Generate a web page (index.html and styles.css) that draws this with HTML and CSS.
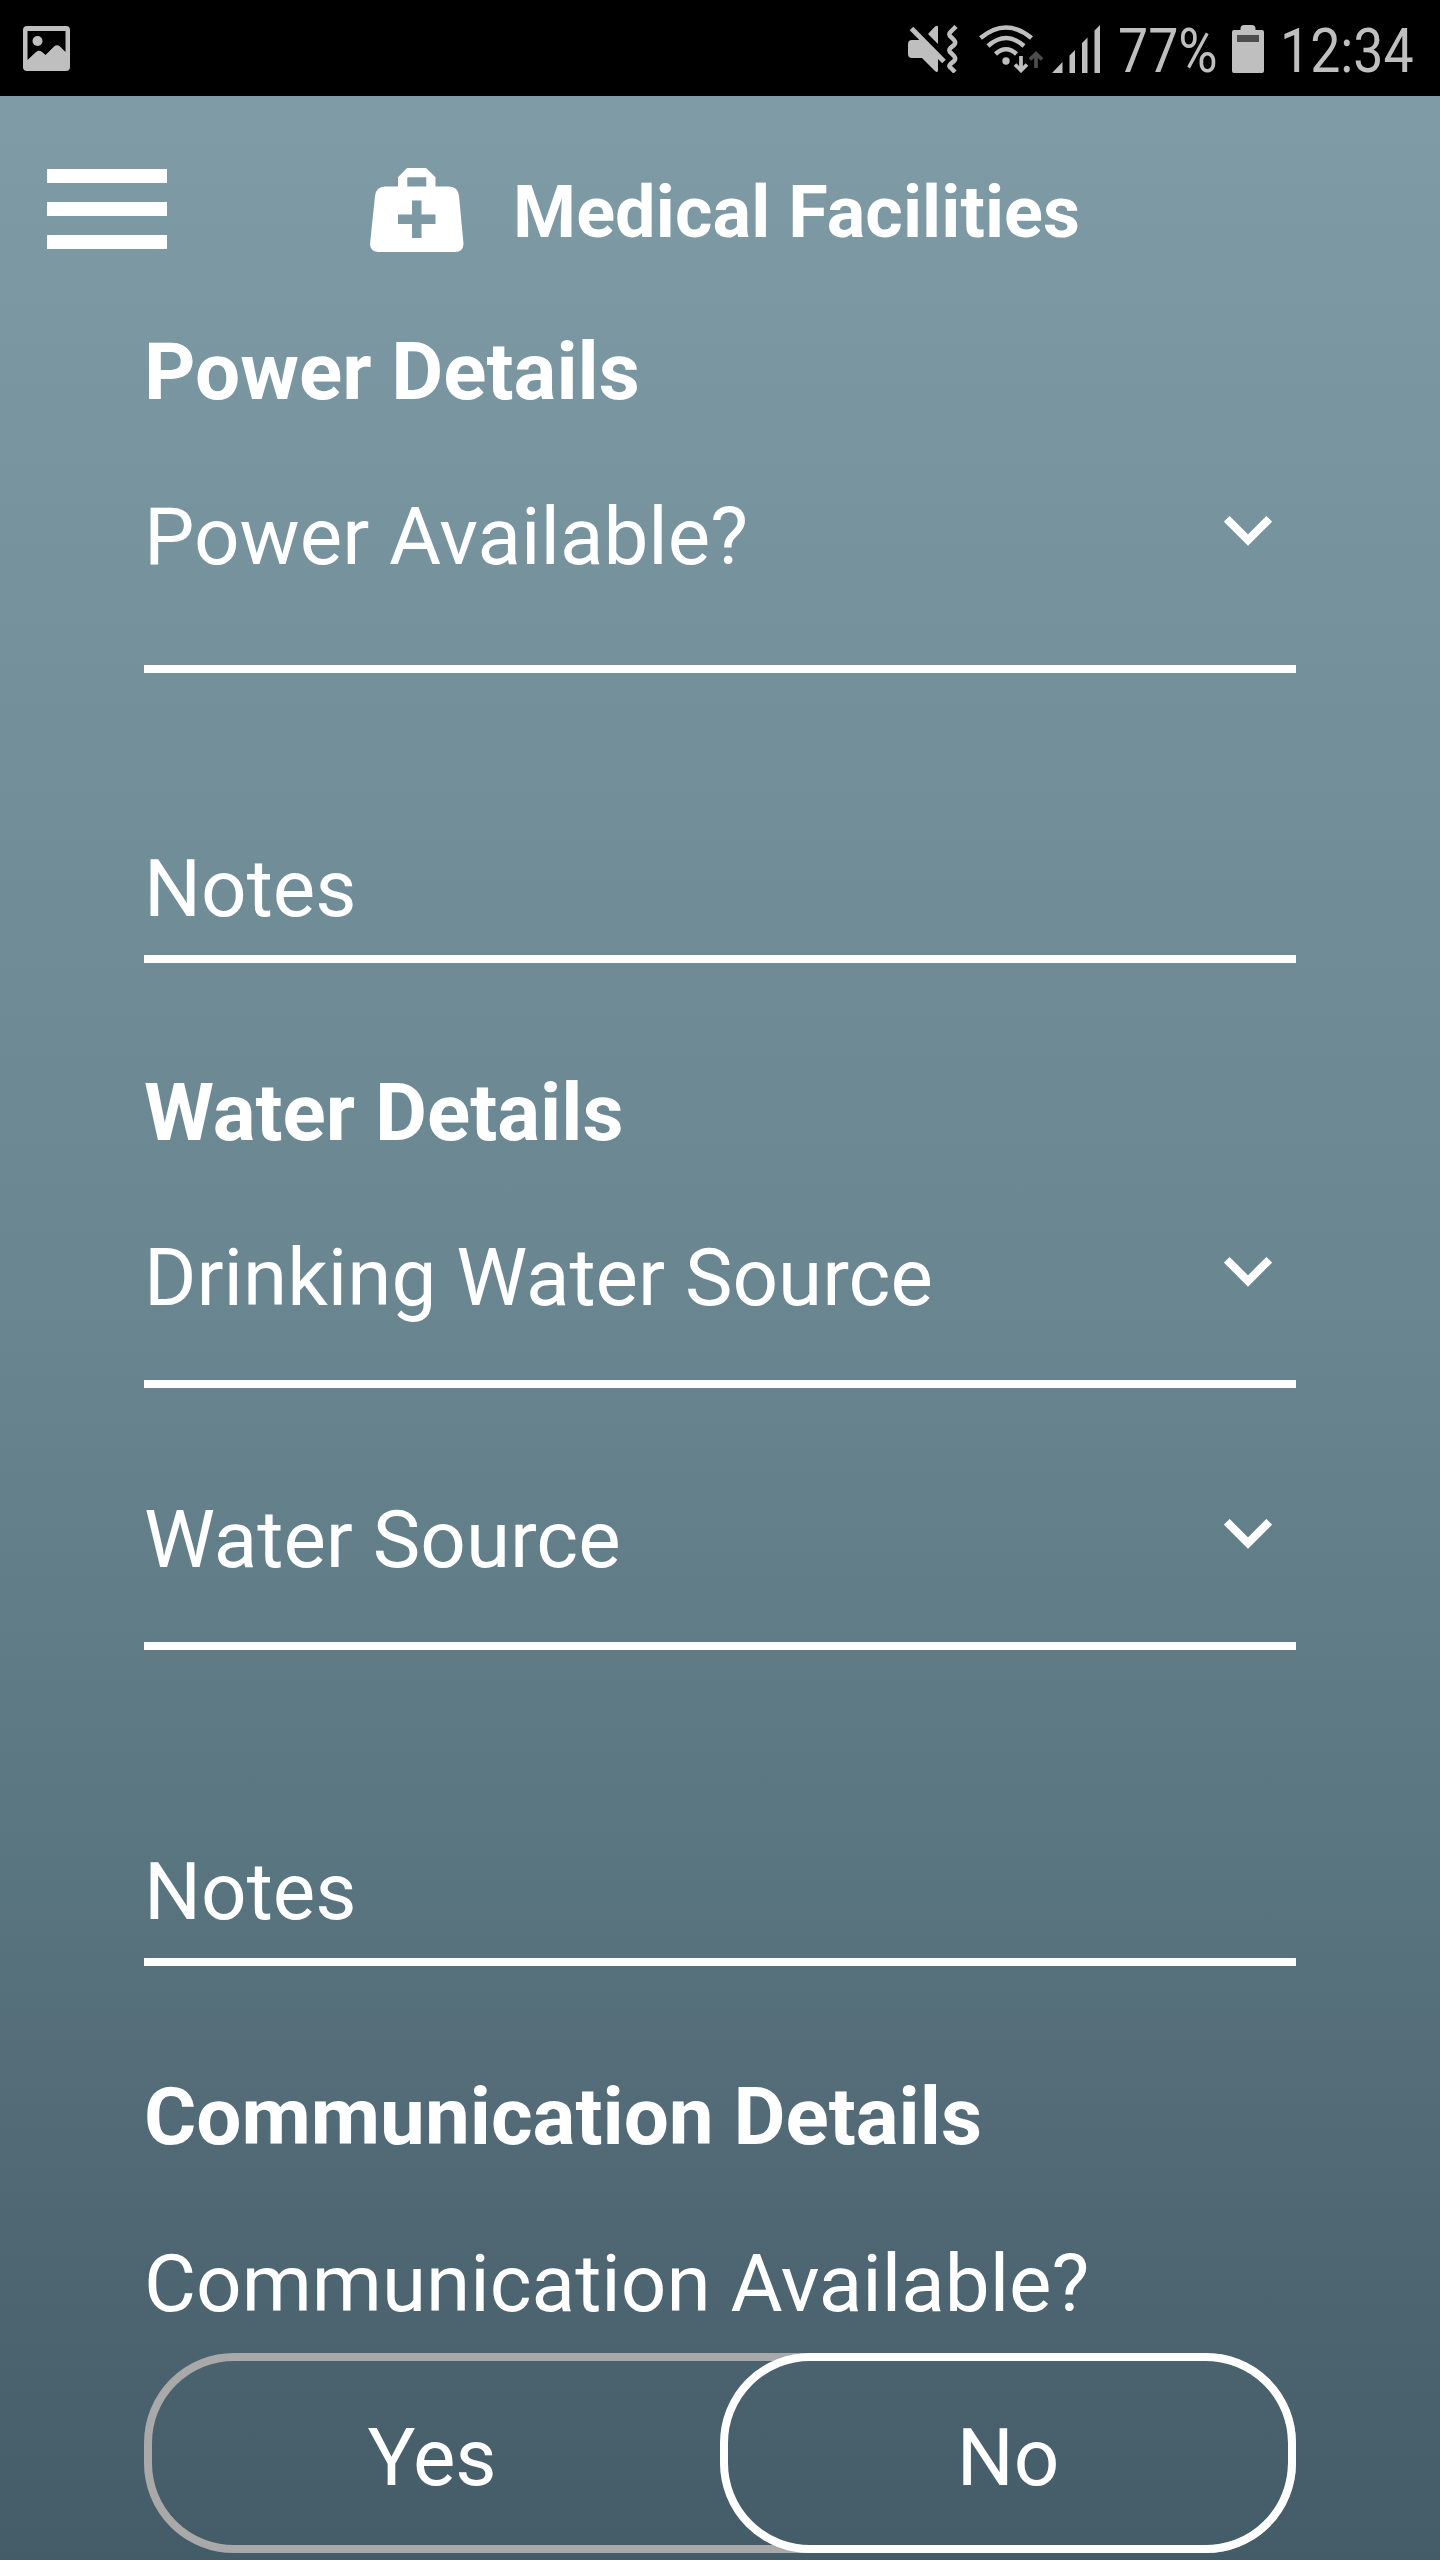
FILE: index.html
```
<!DOCTYPE html>
<html lang="en">
<head>
    <meta charset="UTF-8">
    <meta name="viewport" content="width=device-width, initial-scale=1.0">
    <title>Medical Facilities</title>
    <link rel="stylesheet" href="styles.css">
</head>
<body>
    <div class="status-bar">
        <svg class="icon-image" width="47" height="45" viewBox="0 0 47 45">
            <path fill="#bfbfbf" fill-rule="evenodd" d="M4 0H43Q47 0 47 4V41Q47 45 43 45H4Q0 45 0 41V4Q0 0 4 0ZM4.500 5V34L13 26Q16 23.500 19 26L22.500 29L31 20.500Q34 18 37 20.500L42.500 26V5Z"/>
            <circle cx="14.500" cy="15" r="5" fill="#bfbfbf"/>
        </svg>
        <div class="status-right">
            <svg class="icon-mute" width="50" height="48" viewBox="0 0 50 48">
                <path fill="#bfbfbf" d="M4 15H12L30 31V46Q29 48 27 46L14 33H4Q0 33 0 29V19Q0 15 4 15ZM20 9L27 1.500Q30 0 30 2V19Z"/>
                <path d="M8 1L40 34" stroke="#000" stroke-width="5"/>
                <path d="M3.500 3.500L36 36.500" stroke="#bfbfbf" stroke-width="5"/>
                <path d="M48 1.500L42.500 7Q40 9.500 43 12L46 15Q48.500 17.500 46 20L42.500 23Q40 25.500 43 28L46 31Q48.500 33.500 46 36L42.500 39Q40 41.500 43 43L47 47" fill="none" stroke="#bfbfbf" stroke-width="4.500"/>
            </svg>
            <svg class="icon-wifi" width="66" height="48" viewBox="0 0 66 48">
                <g fill="none" stroke="#bfbfbf" stroke-width="4.500">
                    <path d="M2.500 13Q28 -8 53.500 13"/>
                    <path d="M10 21Q28 5 46 21"/>
                    <path d="M17.500 29Q28 19.500 38.500 29"/>
                </g>
                <circle cx="28" cy="36" r="3.700" fill="#bfbfbf"/>
                <path d="M43 31V45M37 39.500L43 45.500L49 39.500" fill="none" stroke="#bfbfbf" stroke-width="3.700"/>
                <path d="M58 43V28M52 34.500L58 28.500L64 34.500" fill="none" stroke="#4d4d4d" stroke-width="3.700"/>
            </svg>
            <svg class="icon-signal" width="48" height="48" viewBox="0 0 48 48">
                <path fill="#bfbfbf" d="M0 48L10.500 37V48ZM17.500 30.500L23 25V48H17.500ZM30 18L35.500 12.500V48H30ZM42.500 5.500L48 0V48H42.500Z"/>
            </svg>
            <span class="percent">77%</span>
            <svg class="icon-battery" width="32" height="48" viewBox="0 0 32 48">
                <path fill="#bfbfbf" d="M2 5H8.500V3Q9 0 12 0H20Q23 0 23.500 3V5H30Q32 5 32 7V46Q32 48 30 48H2Q0 48 0 46V7Q0 5 2 5Z"/>
                <rect x="5" y="10" width="22" height="7" fill="#4d4d4d"/>
            </svg>
            <span class="clock">12:34</span>
        </div>
    </div>

    <div class="page">
        <div class="header">
            <div class="menu">
                <span></span>
                <span></span>
                <span></span>
            </div>
            <svg class="icon-kit" width="94" height="84" viewBox="0 0 94 84">
                <path fill="#fff" fill-rule="evenodd" d="M37 0H56L65.500 9.300V18.600H79Q88 19 89 28L93.500 76Q93 84 85 84H8Q0 83 0 76L5 28Q6 19 15 18.600H28V9.300ZM37.300 9.300V18.600H56.300V9.300ZM42 32.500V46.500H28V56H42V70H51.500V56H65.500V46.500H51.500V32.500Z"/>
            </svg>
            <h1>Medical Facilities</h1>
        </div>

        <div class="form">
            <h2>Power Details</h2>
            <div class="field select tall">
                <span>Power Available?</span>
                <svg class="chevron" width="48" height="30" viewBox="0 0 48 30"><path d="M2.800 2.800L24 24L45.200 2.800" fill="none" stroke="#fff" stroke-width="8"/></svg>
            </div>
            <div class="field notes">Notes</div>

            <h2>Water Details</h2>
            <div class="field select">
                <span>Drinking Water Source</span>
                <svg class="chevron" width="48" height="30" viewBox="0 0 48 30"><path d="M2.800 2.800L24 24L45.200 2.800" fill="none" stroke="#fff" stroke-width="8"/></svg>
            </div>
            <div class="field select next">
                <span>Water Source</span>
                <svg class="chevron" width="48" height="30" viewBox="0 0 48 30"><path d="M2.800 2.800L24 24L45.200 2.800" fill="none" stroke="#fff" stroke-width="8"/></svg>
            </div>
            <div class="field notes water-notes">Notes</div>

            <h2>Communication Details</h2>
            <div class="question">Communication Available?</div>
            <div class="toggle">
                <div class="option">Yes</div>
                <div class="option selected">No</div>
            </div>
        </div>
    </div>
</body>
</html>
```
FILE: styles.css
```
* {
    box-sizing: border-box;
}
body {
    margin: 0;
    width: 1440px;
    height: 2560px;
    overflow: hidden;
    font-family: Roboto, sans-serif;
    color: white;
    background: #000;
}
svg {
    display: block;
    flex: none;
}
.status-bar {
    display: flex;
    justify-content: space-between;
    align-items: flex-start;
    height: 96px;
    padding: 25px 28px 0 23px;
    color: #bfbfbf;
}
.icon-image {
    margin-top: 1px;
}
.status-right {
    display: flex;
}
.icon-wifi {
    margin-left: 20px;
}
.icon-signal {
    margin-left: 8px;
}
.percent, .clock {
    font-size: 61px;
    line-height: 72px;
    height: 48px;
    margin-top: -10px;
    white-space: nowrap;
    transform: scaleX(0.88);
    transform-origin: left;
}
.percent {
    width: 95px;
    margin-left: 18px;
}
.icon-battery {
    margin-left: 19px;
}
.clock {
    width: 132px;
    margin-left: 16px;
}
.page {
    height: 2464px;
    background: linear-gradient(#7e9ba6 0%, #69858f 50%, #59757f 72%, #526a76 83%, #445c67 100%);
}
.header {
    display: flex;
    align-items: flex-start;
    height: 187px;
    padding: 72px 47px 0;
}
.menu {
    display: flex;
    flex-direction: column;
    justify-content: space-between;
    width: 120px;
    height: 80px;
    margin-top: 1px;
}
.menu span {
    height: 14px;
    background: white;
}
.icon-kit {
    margin-left: 203px;
}
h1 {
    margin: 3px 0 0 49px;
    font-size: 72px;
    line-height: 84px;
    font-weight: bold;
    letter-spacing: 0.1px;
}
.form {
    padding: 0 144px;
    font-size: 80px;
    line-height: 94px;
}
h2 {
    margin: 0;
    padding-top: 42px;
    font-size: 80px;
    line-height: 94px;
    font-weight: bold;
}
.field {
    border-bottom: 8px solid white;
}
.select {
    display: flex;
    justify-content: space-between;
    height: 157px;
    margin-top: 71px;
    padding-right: 24px;
}
.select.tall {
    height: 183px;
}
.select.next {
    margin-top: 105px;
}
.chevron {
    margin-top: 26px;
}
.notes {
    height: 121px;
    margin-top: 169px;
    margin-bottom: 61px;
}
.water-notes {
    margin-top: 195px;
    margin-bottom: 62px;
}
.question {
    margin-top: 73px;
}
.toggle {
    display: flex;
    height: 200px;
    margin-top: 22px;
    border: 8px solid #a9a9a9;
    border-radius: 90px;
}
.option {
    width: 568px;
    padding-right: 8px;
    line-height: 194px;
    text-align: center;
}
.selected {
    width: 576px;
    height: 200px;
    flex: none;
    margin: -8px -8px -8px 0;
    padding: 0;
    border: 8px solid white;
    border-radius: 90px;
}
```
